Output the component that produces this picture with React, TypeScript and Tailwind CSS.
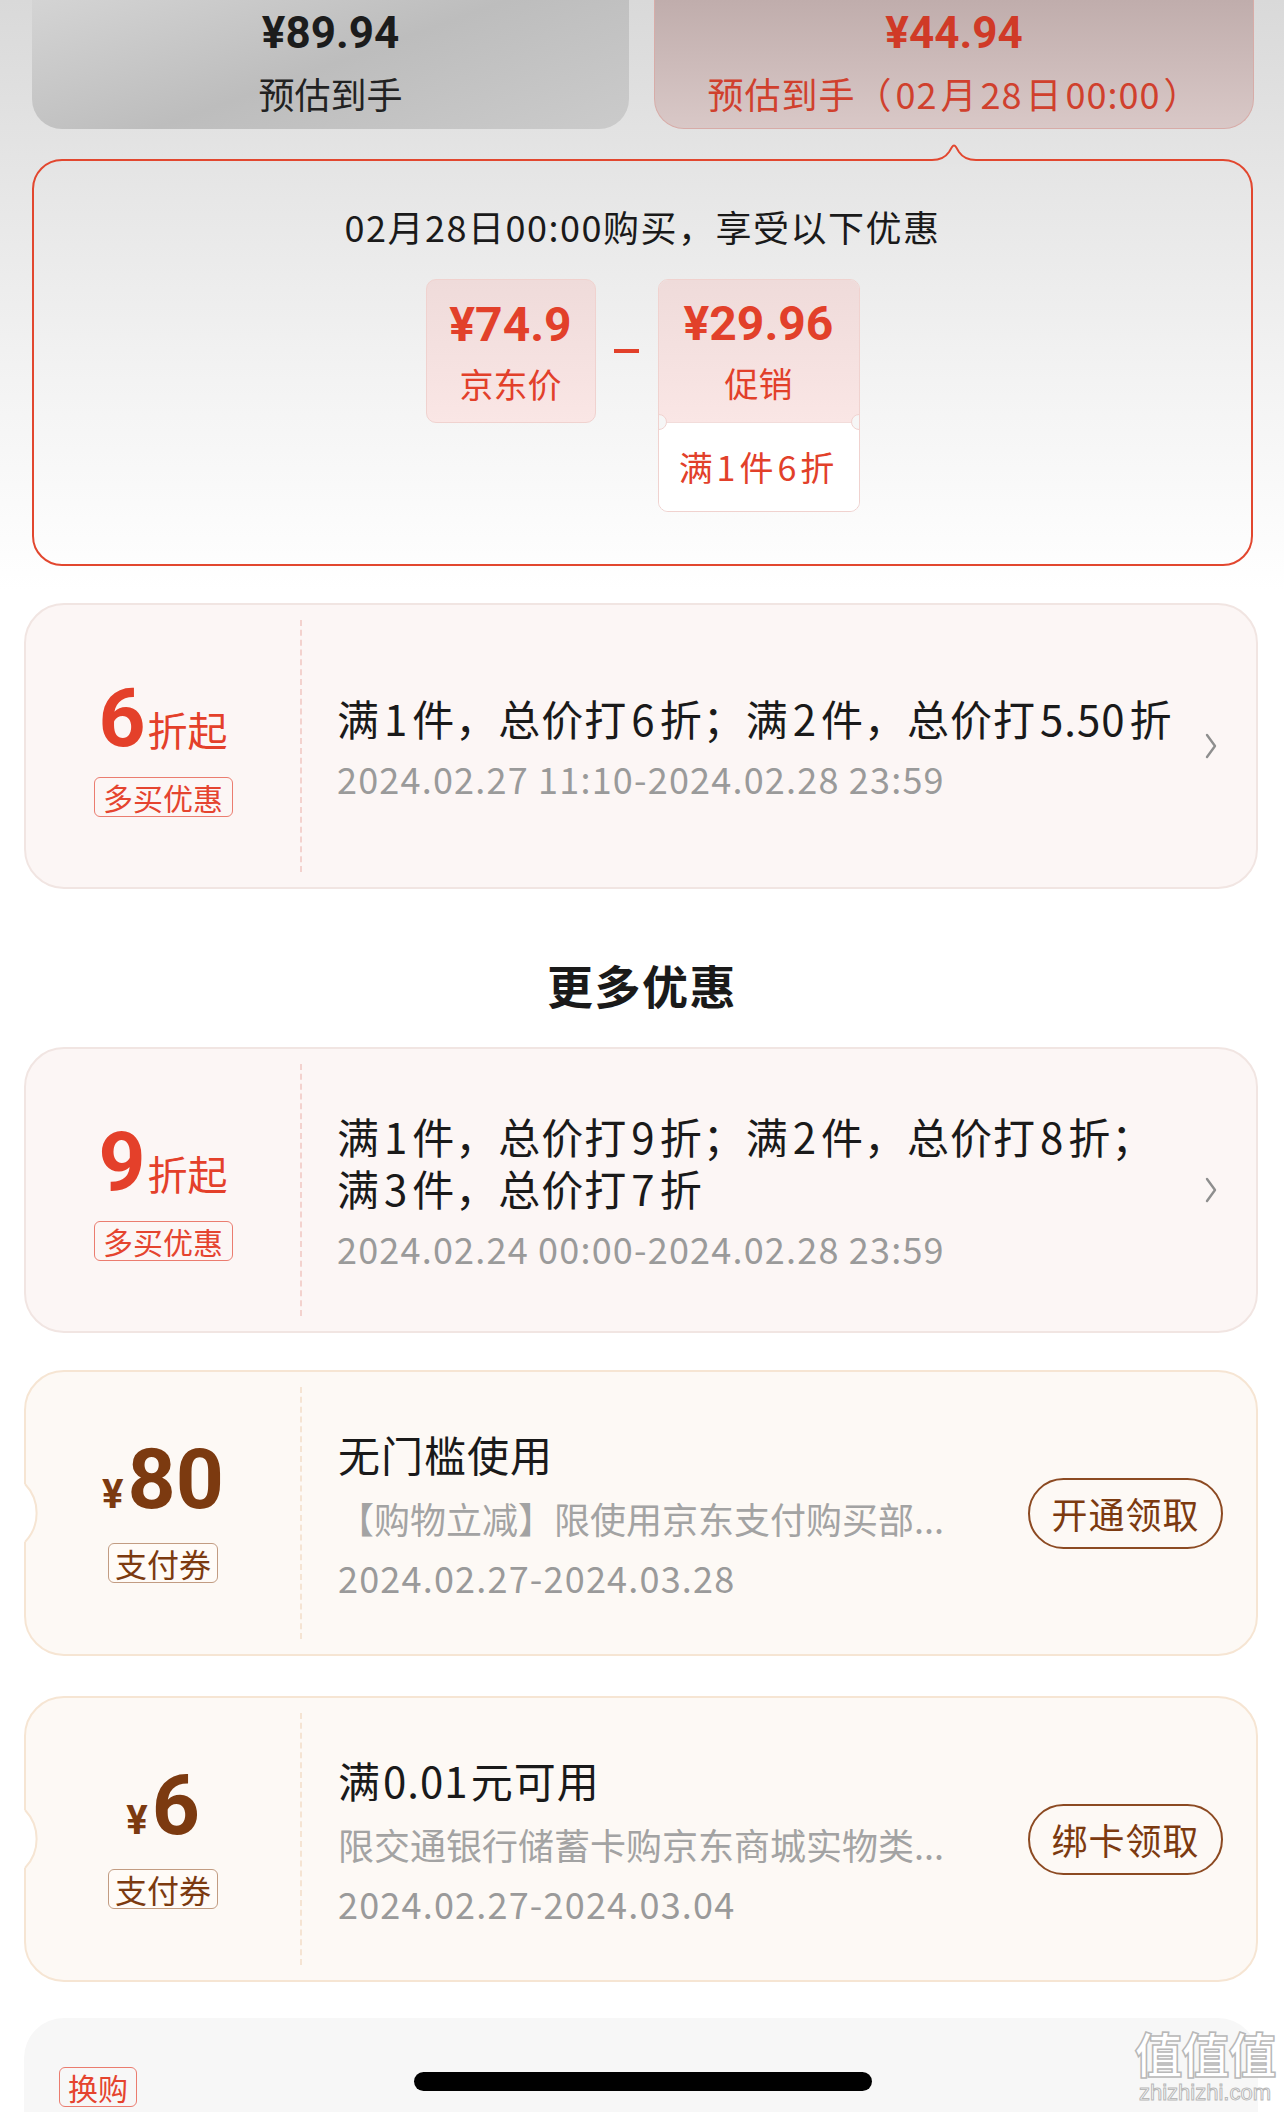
import React from "react";

function sp(text: string, gap: string = "mx-[4px]") {
  const parts = text.split(/(\d[\d.:]*)/);
  return parts.map((p, i) =>
    /^\d/.test(p) ? (
      <span key={i} className={gap}>
        {p}
      </span>
    ) : (
      <React.Fragment key={i}>{p}</React.Fragment>
    )
  );
}

const Chevron = () => (
  <svg width="12" height="26" viewBox="0 0 12 26" fill="none">
    <polyline points="2,2 10,13 2,24" stroke="#8e8e8e" strokeWidth="2.4" strokeLinecap="round" strokeLinejoin="round" />
  </svg>
);

function DiscountCard({ big, lines, date, className }: { big: string; lines: string[]; date: string; className: string }) {
  return (
    <div className={`${className} ml-[24px] w-[1234px] h-[286px] rounded-[40px] border-2 border-[#f1e5e2] bg-[#fcf6f5] flex`}>
      <div className="w-[274px] shrink-0 flex flex-col items-center justify-center pt-[8px]">
        <div className="flex items-baseline text-[#e4402a]">
          <span className="font-['Roboto',sans-serif] font-bold text-[82px] leading-[70px]">{big}</span>
          <span className="text-[40px] leading-[48px] ml-[2px]">折起</span>
        </div>
        <div className="mt-[24px] w-[139px] h-[40px] flex items-center justify-center border-[1.5px] border-[#eb7c6f] rounded-[6px] text-[#e5442f] text-[30px] leading-[36px]">
          多买优惠
        </div>
      </div>
      <div className="my-[15px] w-0 border-l-2 border-dashed border-[#f3d2ce]" />
      <div className="flex-1 pl-[35px] flex flex-col justify-center">
        <div className="text-[42px] leading-[52px] tracking-[1px] text-[#1a1a1a] whitespace-nowrap">
          {lines.map((l, i) => (
            <div key={i}>{sp(l)}</div>
          ))}
        </div>
        <div className="mt-[12px] text-[36px] leading-[44px] tracking-[1.2px] text-[#9a9a9a]">{date}</div>
      </div>
      <div className="w-[51px] shrink-0 flex items-center pr-[39px]">
        <Chevron />
      </div>
    </div>
  );
}

function Notch() {
  return (
    <svg className="absolute left-[-6px] top-[111px]" width="24" height="60" viewBox="0 0 24 60">
      <path d="M0,1 L5,1 A42 42 0 0 1 5,59 L0,59 Z" fill="#ffffff" />
      <path d="M5,1 A42 42 0 0 1 5,59" fill="none" stroke="#f6e5d3" strokeWidth="2" />
    </svg>
  );
}

function PayCard({
  amt,
  title,
  desc,
  date,
  btn,
  className,
}: {
  amt: string;
  title: string;
  desc: string;
  date: string;
  btn: string;
  className: string;
}) {
  return (
    <div className={`${className} relative ml-[24px] w-[1234px] h-[286px] rounded-[40px] border-2 border-[#f6e5d3] bg-[#fdf9f5] flex`}>
      <Notch />
      <div className="w-[274px] shrink-0 flex flex-col items-center justify-center">
        <div className="flex items-baseline text-[#7c3a10] font-['Roboto',sans-serif] font-bold">
          <span className="text-[40px] leading-[48px]">¥</span>
          <span className="text-[84px] leading-[72px] ml-[4px]">{amt}</span>
        </div>
        <div className="mt-[24px] w-[110px] h-[40px] flex items-center justify-center border-[1.5px] border-[#c29c82] rounded-[6px] bg-[#fffbf7] text-[#7c3a10] text-[32px] leading-[38px]">
          支付券
        </div>
      </div>
      <div className="my-[15px] w-0 border-l-2 border-dashed border-[#f5e4d3]" />
      <div className="flex-1 pl-[36px] flex flex-col justify-center">
        <div className="text-[42px] leading-[52px] tracking-[1px] text-[#1a1a1a] whitespace-nowrap">{sp(title, "mx-[2px]")}</div>
        <div className="mt-[16px] text-[36px] leading-[44px] text-[#a3a3a3] whitespace-nowrap">{desc}</div>
        <div className="mt-[15px] text-[36px] leading-[44px] tracking-[1.2px] text-[#9a9a9a]">{date}</div>
      </div>
      <div className="shrink-0 flex items-center pr-[33px]">
        <div className="w-[195px] h-[71px] rounded-full border-2 border-[#8c4a22] flex items-center justify-center text-[36px] leading-[44px] tracking-[1px] text-[#7c3a10]">
          {btn}
        </div>
      </div>
    </div>
  );
}

export default function App() {
  return (
    <div className="relative w-[1284px] h-[2112px] overflow-hidden bg-white font-['Noto_Sans_CJK_SC','Noto_Sans',sans-serif]">
      <div className="bg-[linear-gradient(180deg,#d9d9d9_0px,#e5e5e5_170px,#f3f3f3_380px,#ffffff_590px)] pb-[37px]">
        <div className="flex pl-[32px] gap-[25px] h-[129px]">
          <div className="w-[597px] h-full rounded-b-[30px] bg-[linear-gradient(160deg,#d4d4d4_0%,#bdbdbd_50%,#cbcbcb_100%)] flex flex-col items-center pt-[9px]">
            <div className="font-['Roboto',sans-serif] font-bold text-[44px] leading-[48px] text-[#1c1c1c]">¥89.94</div>
            <div className="mt-[14px] text-[36px] leading-[44px] text-[#222222]">预估到手</div>
          </div>
          <div className="w-[600px] h-full rounded-b-[30px] border-x-[1.5px] border-b-[1.5px] border-[#d7aca8] bg-[linear-gradient(180deg,#c0adac,#d9c8c7)] flex flex-col items-center pt-[9px]">
            <div className="font-['Roboto',sans-serif] font-bold text-[44px] leading-[48px] text-[#d03a27]">¥44.94</div>
            <div className="mt-[14px] text-[36px] leading-[44px] tracking-[1px] text-[#d0402d]">{sp("预估到手（02月28日00:00）", "mx-[3px]")}</div>
          </div>
        </div>

        <div className="relative mt-[30px] ml-[32px] w-[1221px] h-[407px] rounded-[30px] border-2 border-[#e2472f] flex flex-col items-center pt-[43px]">
          <svg className="absolute left-[898px] top-[-20px]" width="44" height="23" viewBox="0 0 44 23">
            <path d="M0,23 L0,19 C8,19 13,17 17,11 L20,6 Q22,3 24,6 L27,11 C31,17 36,19 44,19 L44,23 Z" fill="#e4e4e4" />
            <path d="M0,19 C8,19 13,17 17,11 L20,6 Q22,3 24,6 L27,11 C31,17 36,19 44,19" fill="none" stroke="#e2472f" strokeWidth="2" />
          </svg>
          <div className="text-[36px] leading-[44px] tracking-[1.5px] text-[#1a1a1a]">02月28日00:00购买，享受以下优惠</div>
          <div className="mt-[31px] flex items-start">
            <div className="w-[170px] h-[144px] rounded-[10px] border border-[#f0d2cf] bg-[linear-gradient(180deg,#efdbda,#fae6e5)] flex flex-col items-center pt-[17px]">
              <div className="font-['Roboto',sans-serif] font-bold text-[48px] leading-[56px] text-[#e2402a]">¥74.9</div>
              <div className="mt-[9px] text-[34px] leading-[44px] text-[#e2402a]">京东价</div>
            </div>
            <div className="w-[62px] h-[144px] flex items-center justify-center">
              <div className="w-[25px] h-[4px] bg-[#e2402a]" />
            </div>
            <div className="relative w-[202px] h-[233px] rounded-[10px] border border-[#f0d2cf] overflow-hidden flex flex-col">
              <div className="h-[142px] bg-[linear-gradient(180deg,#efdbda,#fae6e5)] flex flex-col items-center pt-[16px]">
                <div className="font-['Roboto',sans-serif] font-bold text-[48px] leading-[56px] text-[#e2402a]">¥29.96</div>
                <div className="mt-[9px] text-[34px] leading-[44px] text-[#e2402a]">促销</div>
              </div>
              <div className="flex-1 bg-white border-t border-[#f2dcda] flex items-center justify-center text-[34px] leading-[44px] tracking-[4px] text-[#e2402a]">
                满1件6折
              </div>
              <div className="absolute left-[-8px] top-[134px] w-[16px] h-[16px] rounded-full bg-[#f6f6f6] border border-[#f0d2cf]" />
              <div className="absolute right-[-8px] top-[134px] w-[16px] h-[16px] rounded-full bg-[#f6f6f6] border border-[#f0d2cf]" />
            </div>
          </div>
        </div>
      </div>

      <DiscountCard className="" big="6" lines={["满1件，总价打6折；满2件，总价打5.50折"]} date="2024.02.27 11:10-2024.02.28 23:59" />

      <div className="mt-[65px] mb-[33px] h-[60px] text-center text-[46px] leading-[60px] font-bold tracking-[1.5px] text-[#1a1a1a]">更多优惠</div>

      <DiscountCard
        className=""
        big="9"
        lines={["满1件，总价打9折；满2件，总价打8折；", "满3件，总价打7折"]}
        date="2024.02.24 00:00-2024.02.28 23:59"
      />

      <PayCard
        className="mt-[37px]"
        amt="80"
        title="无门槛使用"
        desc="【购物立减】限使用京东支付购买部..."
        date="2024.02.27-2024.03.28"
        btn="开通领取"
      />

      <PayCard
        className="mt-[40px]"
        amt="6"
        title="满0.01元可用"
        desc="限交通银行储蓄卡购京东商城实物类..."
        date="2024.02.27-2024.03.04"
        btn="绑卡领取"
      />

      <div className="mt-[36px] ml-[24px] w-[1234px] h-[200px] rounded-t-[40px] bg-[#f7f7f7] pt-[49px] pl-[35px]">
        <div className="w-[78px] h-[40px] border-[1.5px] border-[#eb7c6f] rounded-[6px] text-[#e5442f] text-[30px] leading-[36px] flex items-center justify-center">
          换购
        </div>
      </div>

      <div className="absolute left-[414px] top-[2072px] w-[458px] h-[19px] rounded-full bg-black" />

      <div className="absolute left-[1130px] top-[2024px] w-[150px] flex flex-col items-center text-white [-webkit-text-stroke:1.5px_#b8b8b8]">
        <div className="text-[48px] leading-[56px] font-bold tracking-[-1px]">值值值</div>
        <div className="text-[22px] leading-[26px] font-['Liberation_Sans',sans-serif] [-webkit-text-stroke:1px_#b8b8b8]">zhizhizhi.com</div>
      </div>
    </div>
  );
}
